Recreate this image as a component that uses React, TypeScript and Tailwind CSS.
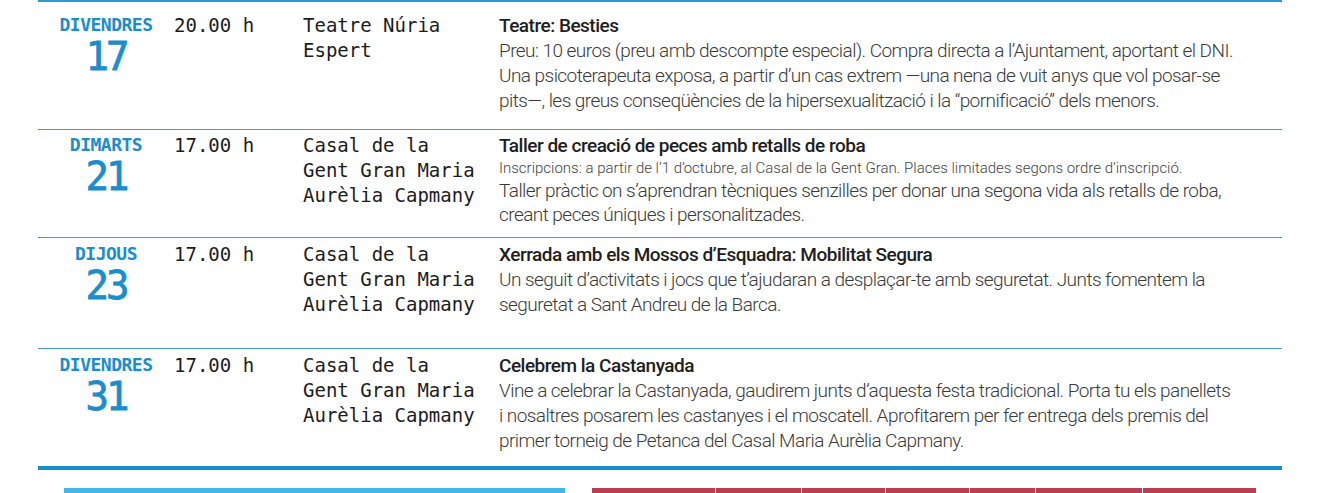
import React from 'react';

type Row = {
  day: string;
  num: string;
  time: string;
  place: string[];
  title: string;
  note?: string;
  lines: string[];
  rowClass: string;
};

const rows: Row[] = [
  {
    day: 'DIVENDRES',
    num: '17',
    time: '20.00 h',
    place: ['Teatre Núria', 'Espert'],
    title: 'Teatre: Besties',
    lines: [
      'Preu: 10 euros (preu amb descompte especial). Compra directa a l’Ajuntament, aportant el DNI.',
      'Una psicoterapeuta exposa, a partir d’un cas extrem —una nena de vuit anys que vol posar-se',
      'pits—, les greus conseqüències de la hipersexualització i la “pornificació” dels menors.',
    ],
    rowClass: 'min-h-[128px] pt-[11px]',
  },
  {
    day: 'DIMARTS',
    num: '21',
    time: '17.00 h',
    place: ['Casal de la', 'Gent Gran Maria', 'Aurèlia Capmany'],
    title: 'Taller de creació de peces amb retalls de roba',
    note: 'Inscripcions: a partir de l’1 d’octubre, al Casal de la Gent Gran. Places limitades segons ordre d’inscripció.',
    lines: [
      'Taller pràctic on s’aprendran tècniques senzilles per donar una segona vida als retalls de roba,',
      'creant peces úniques i personalitzades.',
    ],
    rowClass: 'min-h-[108px] pt-[3px]',
  },
  {
    day: 'DIJOUS',
    num: '23',
    time: '17.00 h',
    place: ['Casal de la', 'Gent Gran Maria', 'Aurèlia Capmany'],
    title: 'Xerrada amb els Mossos d’Esquadra: Mobilitat Segura',
    lines: [
      'Un seguit d’activitats i jocs que t’ajudaran a desplaçar-te amb seguretat. Junts fomentem la',
      'seguretat a Sant Andreu de la Barca.',
    ],
    rowClass: 'min-h-[111px] pt-[4px]',
  },
  {
    day: 'DIVENDRES',
    num: '31',
    time: '17.00 h',
    place: ['Casal de la', 'Gent Gran Maria', 'Aurèlia Capmany'],
    title: 'Celebrem la Castanyada',
    lines: [
      'Vine a celebrar la Castanyada, gaudirem junts d’aquesta festa tradicional. Porta tu els panellets',
      'i nosaltres posarem les castanyes i el moscatell. Aprofitarem per fer entrega dels premis del',
      'primer torneig de Petanca del Casal Maria Aurèlia Capmany.',
    ],
    rowClass: 'min-h-[117px] pt-[4px]',
  },
];

const mono = { fontFamily: '"DejaVu Sans Mono", "Liberation Mono", monospace' };
const sans = { fontFamily: 'Roboto, "Liberation Sans", sans-serif' };

// red strip under the table, split in blocks
const redSegments = [123, 85, 83, 83, 65, 106, 113];

export default function App() {
  return (
    <div className="w-[1328px] h-[493px] bg-white overflow-hidden">
      <div className="ml-[38px] w-[1244px] border-t-2 border-[#2b9ad6]">
        {rows.map((r, i) => (
          <div
            key={i}
            className={`grid grid-cols-[136px_129px_196px_1fr] ${r.rowClass} ${
              i < rows.length - 1 ? 'border-b border-[#3f9dc6]' : ''
            }`}
          >
            {/* day */}
            <div className="flex flex-col items-center pt-[2px] text-[#1a8dcc]" style={mono}>
              <span className="text-[18px] leading-[20px] font-bold tracking-[-0.5px]">{r.day}</span>
              <span className="text-[39px] leading-[44px] tracking-[-3px] [-webkit-text-stroke:0.8px_#1a8dcc]">
                {r.num}
              </span>
            </div>
            {/* time */}
            <div className="text-[19px] leading-[25px] text-[#1c1c1c]" style={mono}>
              {r.time}
            </div>
            {/* place */}
            <div className="text-[19px] leading-[25px] text-[#1c1c1c]" style={mono}>
              {r.place.map((p) => (
                <div key={p} className="whitespace-nowrap">{p}</div>
              ))}
            </div>
            {/* description */}
            <div style={sans}>
              <div className="text-[19px] leading-[25px] font-medium text-[#1e1e1e] tracking-[-0.5px] whitespace-nowrap">
                {r.title}
              </div>
              {r.note && (
                <div className="text-[15px] leading-[21px] font-light text-[#444] whitespace-nowrap">
                  {r.note}
                </div>
              )}
              {r.lines.map((l) => (
                <div
                  key={l}
                  className={`text-[19px] font-light text-[#3a3a3a] tracking-[-0.55px] whitespace-nowrap ${
                    r.note ? 'leading-[24px]' : 'leading-[25px]'
                  }`}
                >
                  {l}
                </div>
              ))}
            </div>
          </div>
        ))}
      </div>
      <div className="ml-[38px] w-[1244px] h-1 bg-[#178dcb]" />
      <div className="mt-[18px] flex">
        <div className="ml-[64px] w-[501px] h-[5px] bg-[#45b7e6]" />
        <div className="ml-[27px] flex gap-px">
          {redSegments.map((w, i) => (
            <div key={i} className="h-[5px] bg-[#bb3d50]" style={{ width: w }} />
          ))}
        </div>
      </div>
    </div>
  );
}
